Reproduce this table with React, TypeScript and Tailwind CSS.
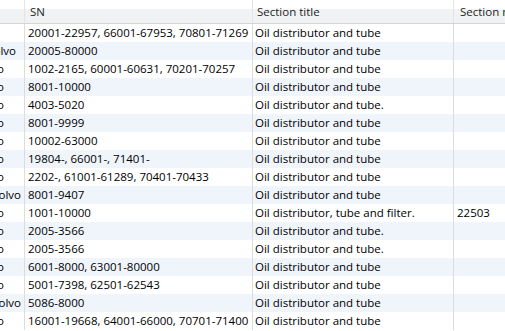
import React from 'react'

type Row = { lead: string, leadPad: string, sn: string, title: string, num: string }

// first column is scrolled out of view; only the tail of the text shows
const ROWS: Row[] = [
  { lead: '', leadPad: 'pr-[20px]', sn: '20001-22957, 66001-67953, 70801-71269', title: 'Oil distributor and tube', num: '' },
  { lead: 'Volvo', leadPad: 'pr-[8px]', sn: '20005-80000', title: 'Oil distributor and tube', num: '' },
  { lead: 'Volvo', leadPad: 'pr-[20px]', sn: '1002-2165, 60001-60631, 70201-70257', title: 'Oil distributor and tube', num: '' },
  { lead: 'Volvo', leadPad: 'pr-[20px]', sn: '8001-10000', title: 'Oil distributor and tube', num: '' },
  { lead: 'Volvo', leadPad: 'pr-[20px]', sn: '4003-5020', title: 'Oil distributor and tube.', num: '' },
  { lead: 'Volvo', leadPad: 'pr-[20px]', sn: '8001-9999', title: 'Oil distributor and tube', num: '' },
  { lead: 'Volvo', leadPad: 'pr-[20px]', sn: '10002-63000', title: 'Oil distributor and tube', num: '' },
  { lead: 'Volvo', leadPad: 'pr-[20px]', sn: '19804-, 66001-, 71401-', title: 'Oil distributor and tube', num: '' },
  { lead: 'Volvo', leadPad: 'pr-[20px]', sn: '2202-, 61001-61289, 70401-70433', title: 'Oil distributor and tube', num: '' },
  { lead: 'Volvo', leadPad: 'pr-[3px]', sn: '8001-9407', title: 'Oil distributor and tube', num: '' },
  { lead: 'Volvo', leadPad: 'pr-[20px]', sn: '1001-10000', title: 'Oil distributor, tube and filter.', num: '22503' },
  { lead: 'Volvo', leadPad: 'pr-[20px]', sn: '2005-3566', title: 'Oil distributor and tube.', num: '' },
  { lead: 'Volvo', leadPad: 'pr-[20px]', sn: '2005-3566', title: 'Oil distributor and tube.', num: '' },
  { lead: 'Volvo', leadPad: 'pr-[20px]', sn: '6001-8000, 63001-80000', title: 'Oil distributor and tube', num: '' },
  { lead: 'Volvo', leadPad: 'pr-[20px]', sn: '5001-7398, 62501-62543', title: 'Oil distributor and tube', num: '' },
  { lead: 'Volvo', leadPad: 'pr-[3px]', sn: '5086-8000', title: 'Oil distributor and tube', num: '' },
  { lead: 'Volvo', leadPad: 'pr-[20px]', sn: '16001-19668, 64001-66000, 70701-71400', title: 'Oil distributor and tube', num: '' },
]

export default function App() {
  return (
    <div className="w-[505px] h-[331px] overflow-hidden bg-white text-[11.5px] text-black"
      style={{ fontFamily: '"Open Sans", "Noto Sans", sans-serif' }}>
      <div className="flex h-[24px] border-b border-[#d5d5d5] bg-gradient-to-b from-white from-40% to-[#f1f2f4] to-40% text-[#1e1e1e]">
        <div className="w-[25px] shrink-0 border-r border-[#e4e4e4]" />
        <div className="w-[228px] shrink-0 border-r border-[#e4e4e4] pl-[5px] flex items-center">SN</div>
        <div className="w-[201px] shrink-0 border-r border-[#e4e4e4] pl-[4px] flex items-center">Section title</div>
        <div className="flex-1 pl-[6px] flex items-center whitespace-nowrap overflow-hidden">Section number</div>
      </div>
      {ROWS.map((r, i) => (
        <div key={i} className={`flex h-[18px] ${i % 2 === 1 ? 'bg-[#f0f5fb]' : 'bg-white'}`}>
          <div className={`w-[25px] shrink-0 border-r border-[#dcdcdc] flex justify-end items-center overflow-hidden whitespace-nowrap ${r.leadPad}`}>
            {r.lead}
          </div>
          <div className="w-[228px] shrink-0 border-r border-[#dcdcdc] pl-[3px] flex items-center whitespace-nowrap overflow-hidden">{r.sn}</div>
          <div className="w-[201px] shrink-0 border-r border-[#dcdcdc] pl-[2px] flex items-center whitespace-nowrap overflow-hidden">{r.title}</div>
          <div className="flex-1 pl-[3px] flex items-center whitespace-nowrap overflow-hidden">{r.num}</div>
        </div>
      ))}
    </div>
  )
}
